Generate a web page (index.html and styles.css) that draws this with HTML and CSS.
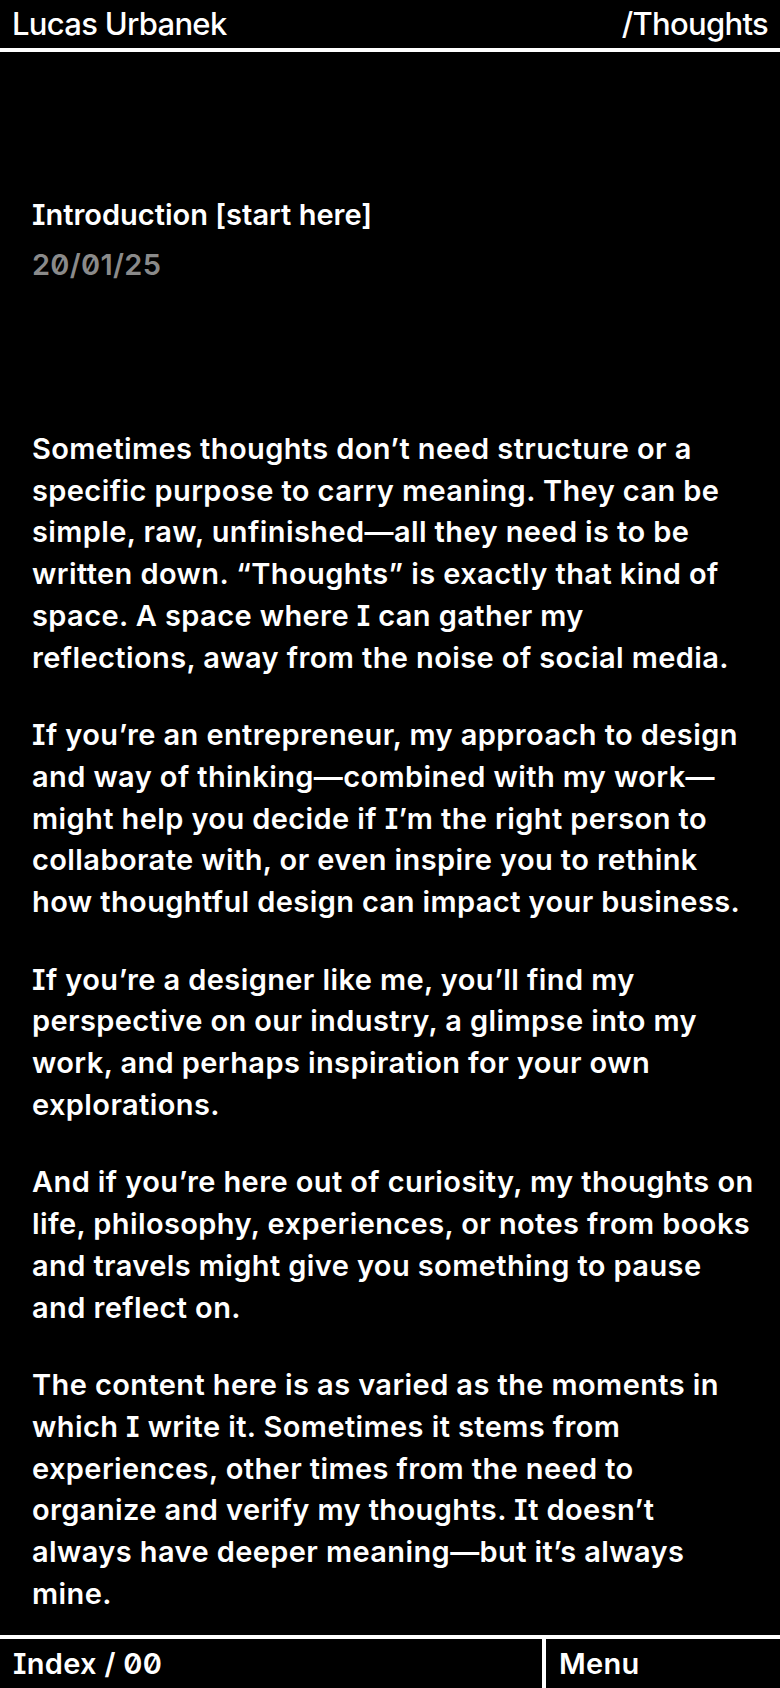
FILE: index.html
```html
<!DOCTYPE html>
<html lang="en">
<head>
<meta charset="utf-8">
<title>Thoughts — Lucas Urbanek</title>
<link rel="stylesheet" href="styles.css">
</head>
<body>
<div class="page">
  <header class="topbar">
    <span class="brand">Lucas Urbanek</span>
    <span class="section">/Thoughts</span>
  </header>
  <main class="content">
    <div class="post-head">
      <h1 class="post-title">Introduction [start here]</h1>
      <div class="post-date">20/01/25</div>
    </div>
    <article class="post-body">
      <p>Sometimes thoughts don’t need structure or a<br>specific purpose to carry meaning. They can be<br>simple, raw, unfinished—all they need is to be<br>written down. “Thoughts” is exactly that kind of<br>space. A space where I can gather my<br>reflections, away from the noise of social media.</p>
      <p>If you’re an entrepreneur, my approach to design<br>and way of thinking—combined with my work—<br>might help you decide if I’m the right person to<br>collaborate with, or even inspire you to rethink<br>how thoughtful design can impact your business.</p>
      <p>If you’re a designer like me, you’ll find my<br>perspective on our industry, a glimpse into my<br>work, and perhaps inspiration for your own<br>explorations.</p>
      <p>And if you’re here out of curiosity, my thoughts on<br>life, philosophy, experiences, or notes from books<br>and travels might give you something to pause<br>and reflect on.</p>
      <p>The content here is as varied as the moments in<br>which I write it. Sometimes it stems from<br>experiences, other times from the need to<br>organize and verify my thoughts. It doesn’t<br>always have deeper meaning—but it’s always<br>mine.</p>
    </article>
  </main>
  <footer class="bottombar">
    <div class="crumb">Index / 00</div>
    <div class="menu">Menu</div>
  </footer>
</div>
</body>
</html>
```
FILE: styles.css
```css
* { box-sizing: border-box; }
html, body {
  margin: 0;
  padding: 0;
  background: #000;
}
body {
  color: #fff;
  font-family: Inter, "Noto Sans", "Liberation Sans", sans-serif;
  font-weight: 600;
  font-feature-settings: "zero" 1, "cv08" 1;
  -webkit-font-smoothing: antialiased;
}
.page {
  height: 1688px;
  display: flex;
  flex-direction: column;
  overflow: hidden;
}
.topbar {
  flex: none;
  height: 52px;
  display: flex;
  justify-content: space-between;
  align-items: flex-start;
  padding: 0 12px;
  border-bottom: 4px solid #fff;
  font-size: 31px;
  font-weight: 500;
  line-height: 48px;
  letter-spacing: -0.7px;
}
.content {
  flex: 1;
  min-height: 0;
  padding: 141.6px 16px 0 32px;
  font-size: 29px;
  line-height: 41.8px;
  letter-spacing: 0.4px;
}
.post-head {
  margin-bottom: 142.4px;
}
.post-title {
  margin: 0 0 8.2px;
  font-size: inherit;
  font-weight: 600;
  line-height: inherit;
  letter-spacing: 0;
}
.post-date {
  color: #8a8a8a;
  letter-spacing: 0.3px;
}
.post-body p {
  margin: 0 0 35.5px;
  white-space: nowrap;
}
.bottombar {
  flex: none;
  height: 53px;
  display: grid;
  grid-template-columns: 542px 1fr;
  border-top: 4px solid #fff;
  font-size: 29px;
  line-height: 49px;
  letter-spacing: 0.3px;
}
.crumb {
  padding-left: 13px;
}
.menu {
  border-left: 4px solid #fff;
  padding-left: 13px;
}
```
